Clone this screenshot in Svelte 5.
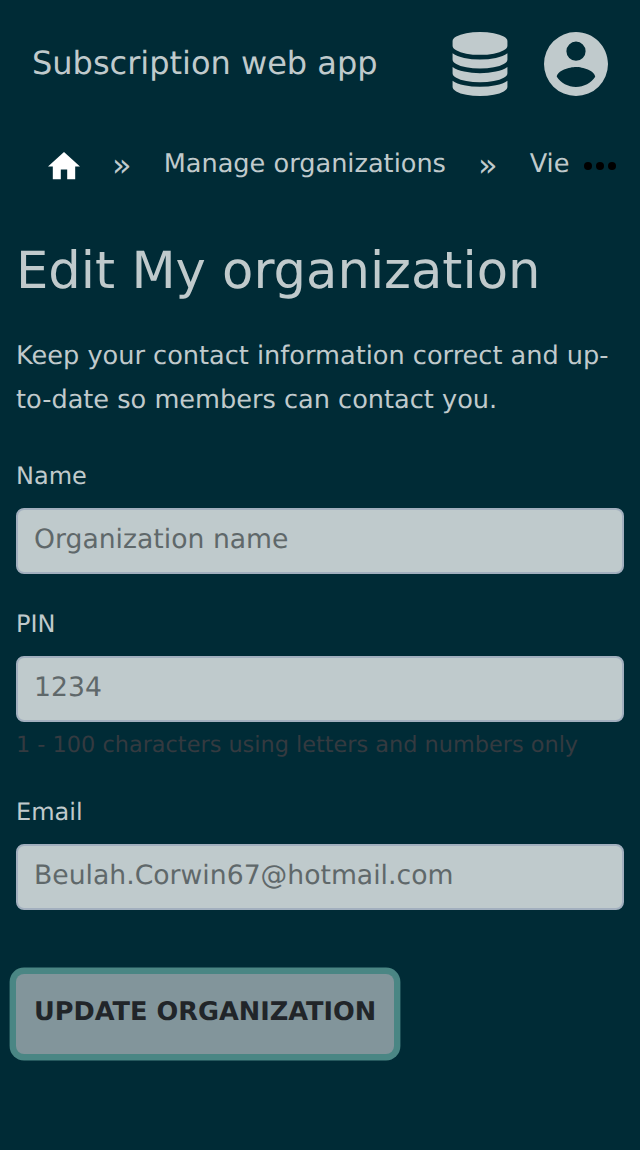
<script>
  const fields = [
    { id: 'name', label: 'Name', placeholder: 'Organization name' },
    { id: 'pin', label: 'PIN', placeholder: '1234', hint: '1 - 100 characters using letters and numbers only' },
    { id: 'email', label: 'Email', placeholder: 'Beulah.Corwin67@hotmail.com' }
  ];
</script>

<div class="page">
  <header>
    <span class="brand">Subscription web app</span>
    <nav class="tools">
      <svg class="db" viewBox="0 0 1536 1792"><path d="M768 768q237 0 443-43t325-127v170q0 69-103 128t-280 93.5-385 34.5-385-34.5-280-93.5-103-128v-170q119 84 325 127t443 43zm0 768q237 0 443-43t325-127v170q0 69-103 128t-280 93.5-385 34.5-385-34.5-280-93.5-103-128v-170q119 84 325 127t443 43zm0-384q237 0 443-43t325-127v170q0 69-103 128t-280 93.5-385 34.5-385-34.5-280-93.5-103-128v-170q119 84 325 127t443 43zm0-1152q208 0 385 34.5t280 93.5 103 128v128q0 69-103 128t-280 93.5-385 34.5-385-34.5-280-93.5-103-128v-128q0-69 103-128t280-93.5 385-34.5z" /></svg>
      <svg class="user" viewBox="2 2 20 20"><path d="M12,19.2C9.5,19.2 7.29,17.92 6,16C6.03,14 10,12.9 12,12.9C14,12.9 17.97,14 18,16C16.71,17.92 14.5,19.2 12,19.2M12,5A3,3 0 0,1 15,8A3,3 0 0,1 12,11A3,3 0 0,1 9,8A3,3 0 0,1 12,5M12,2A10,10 0 0,0 2,12A10,10 0 0,0 12,22A10,10 0 0,0 22,12C22,6.47 17.5,2 12,2Z" /></svg>
    </nav>
  </header>

  <nav class="crumbs">
    <svg class="home" viewBox="2 3 20 17"><path d="M10,20V14H14V20H19V12H22L12,3L2,12H5V20H10Z" /></svg>
    <span class="sep">»</span>
    <span class="crumb">Manage organizations</span>
    <span class="sep">»</span>
    <span class="crumb">Vie</span>
    <svg class="dots" viewBox="0 0 32 8"><circle cx="4" cy="4" r="4" /><circle cx="16" cy="4" r="4" /><circle cx="28" cy="4" r="4" /></svg>
  </nav>

  <main>
    <h1>Edit My organization</h1>
    <p>Keep your contact information correct and up-to-date so members can contact you.</p>
    <form>
      {#each fields as field}
        <div class="field">
          <label for={field.id}>{field.label}</label>
          <input id={field.id} placeholder={field.placeholder} />
          {#if field.hint}<small>{field.hint}</small>{/if}
        </div>
      {/each}
      <button type="button">UPDATE ORGANIZATION</button>
    </form>
  </main>
</div>

<style>
  :global(body) { margin: 0; background: #002b36; }
  .page {
    box-sizing: border-box;
    height: 1150px;
    overflow: hidden;
    background: #002b36;
    color: #c0cacc;
    font-family: "DejaVu Sans", sans-serif;
    font-size: 25.6px;
    text-rendering: geometricPrecision;
  }
  svg { display: block; flex: none; }
  header {
    display: flex;
    align-items: center;
    justify-content: space-between;
    height: 128px;
    padding: 0 32px;
  }
  .brand { font-size: 32px; line-height: 48px; margin-bottom: 2px; }
  .tools { display: flex; gap: 36px; fill: #c0cacc; }
  .db { width: 56px; height: 64px; }
  .user { width: 64px; height: 64px; }
  .crumbs {
    display: flex;
    align-items: center;
    height: 76px;
    padding: 0 24px 0 48px;
    line-height: 44px;
    white-space: nowrap;
  }
  .home { width: 32px; height: 27.2px; fill: #fff; }
  .sep { width: 19.7px; margin: 0 0 2px 32px; font-size: 32px; }
  .crumb { margin-left: 32px; margin-bottom: 4px; }
  .dots { width: 32px; height: 8px; margin-left: auto; fill: #000; }
  main { padding: 37px 16px 0; }
  h1 { margin: 0; font-size: 51.2px; font-weight: 400; line-height: 60px; }
  p { margin: 33px 0 4px; line-height: 44px; }
  form { display: flex; flex-direction: column; align-items: flex-start; }
  .field { display: flex; flex-direction: column; width: 100%; margin-top: 28px; }
  label { font-size: 24px; line-height: 44px; height: 54px; }
  input {
    box-sizing: border-box;
    width: 100%;
    height: 66px;
    padding: 0 16px 4px;
    border: 2px solid #a2afbe;
    border-radius: 8px;
    background: #bfcacc;
    font: 26.66px "DejaVu Sans", sans-serif;
    text-rendering: geometricPrecision;
    outline: none;
  }
  input::placeholder { color: #5f686a; opacity: 1; }
  small { font-size: 22.4px; line-height: 34px; margin-top: 6px; color: #343a40; }
  button {
    height: 80px;
    margin-top: 64px;
    padding: 0 18px 4px;
    border: 0;
    border-radius: 8px;
    box-shadow: 0 0 0 6.4px #4a8684;
    background: #82959b;
    color: #212529;
    font: 700 25.6px "DejaVu Sans", sans-serif;
    text-rendering: geometricPrecision;
  }
</style>
